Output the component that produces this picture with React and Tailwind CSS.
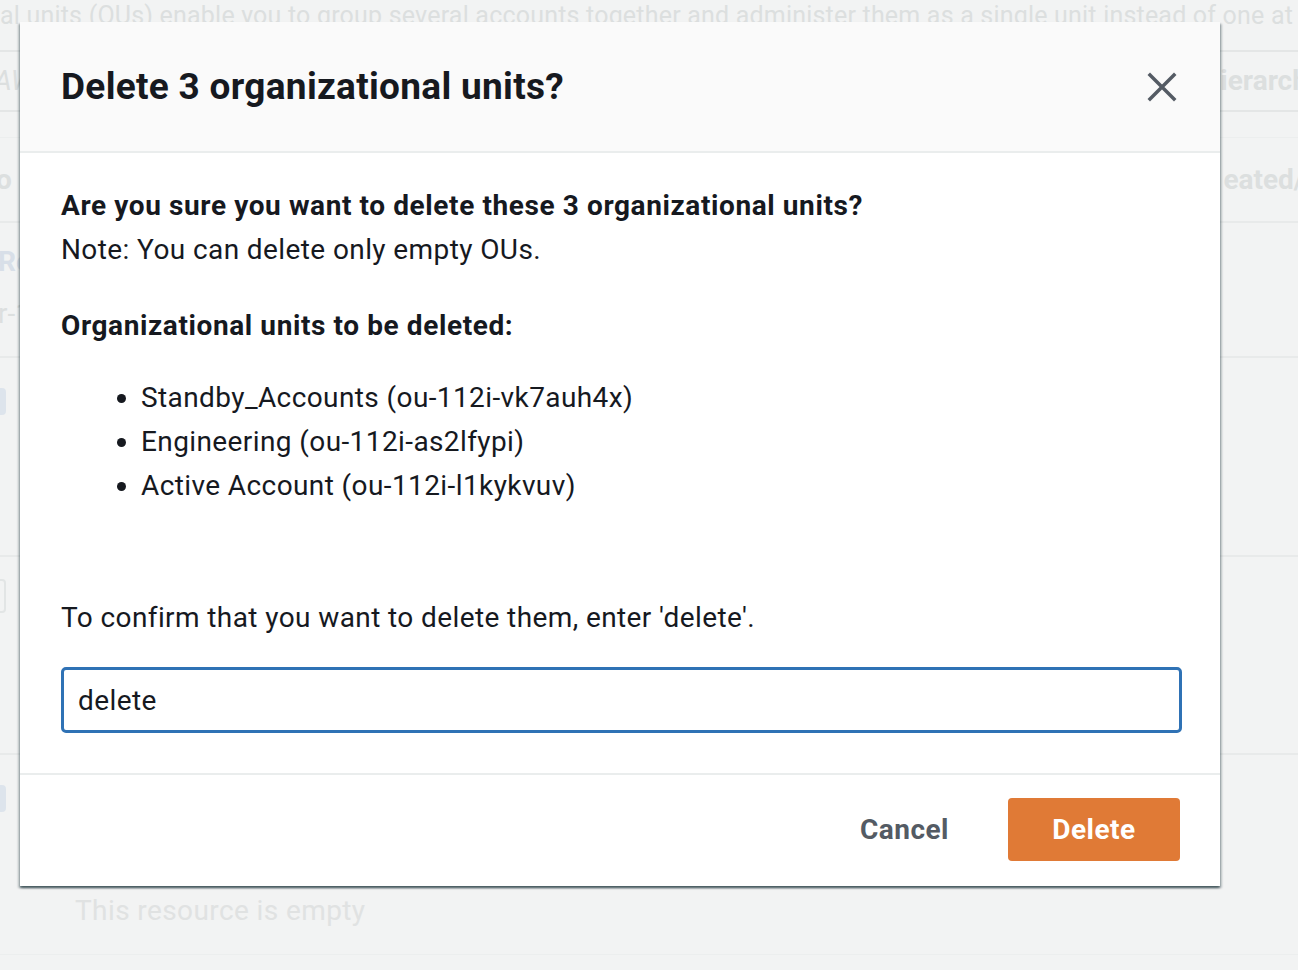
import React from 'react';

const units = [
  'Standby_Accounts (ou-112i-vk7auh4x)',
  'Engineering (ou-112i-as2lfypi)',
  'Active Account (ou-112i-l1kykvuv)',
];

function CloseIcon() {
  return (
    <svg width="30" height="30" viewBox="0 0 30 30" fill="none">
      <path d="M3 3L27 27M27 3L3 27" stroke="#545b64" strokeWidth="3.5" strokeLinecap="square" />
    </svg>
  );
}

function Backdrop() {
  return (
    <div className="w-full min-h-[970px] bg-[#f2f3f3] overflow-hidden text-[28px] text-[#dcdfdf]">
      <div className="h-[50px] whitespace-nowrap leading-[32px] text-[25px] tracking-[0.2px]">
        al units (OUs) enable you to group several accounts together and administer them as a single unit instead of one at a time
      </div>
      <div className="h-[62px] border-y-2 border-[#e4e6e6] flex items-center justify-between whitespace-nowrap">
        <span className="italic -ml-[6px]">AW</span>
        <span className="font-bold -mr-[24px]">ierarchy</span>
      </div>
      <div className="h-[26px] border-b border-[#eceeee]"></div>
      <div className="h-[85px] border-b-2 border-[#e8eaea] flex items-center justify-between font-bold whitespace-nowrap">
        <span className="-ml-[4px]">o</span>
        <span className="-mr-[22px]">eated/d</span>
      </div>
      <div className="h-[135px] border-b-2 border-[#e8eaea] flex flex-col justify-center gap-[10px] pb-[4px] whitespace-nowrap">
        <span className="font-bold text-[#d8dfe8] -ml-[2px]">Re</span>
        <span className="-ml-[2px]">r-1</span>
      </div>
      <div className="h-[199px] border-b-2 border-[#e8eaea] pt-[30px]">
        <div className="w-[6px] h-[27px] rounded-r-[4px] bg-[#dde4ec]"></div>
      </div>
      <div className="h-[198px] border-b-2 border-[#e8eaea] pt-[22px]">
        <div className="w-[6px] h-[34px] rounded-r-[4px] border-2 border-l-0 border-[#e2e5e5]"></div>
      </div>
      <div className="h-[200px] border-b border-[#eceeee] pt-[30px] flex flex-col">
        <div className="w-[6px] h-[27px] rounded-r-[4px] bg-[#dde4ec]"></div>
        <div className="pl-[75px] mt-[78px] text-[#e0e2e2] tracking-[0.4px]">This resource is empty</div>
      </div>
    </div>
  );
}

function DeleteModal() {
  return (
    <div className="absolute left-[20px] top-[22px] w-[1200px] bg-white shadow-[0_2px_2px_0_rgba(0,28,36,0.55),2px_2px_2px_0_rgba(0,28,36,0.2),-2px_2px_2px_0_rgba(0,28,36,0.2)] text-[#16191f]">
      <div className="h-[131px] bg-[#fafafa] border-b-2 border-[#eaeded] pl-[41px] pr-[42px] flex items-center justify-between">
        <h2 className="text-[37px] font-bold leading-[44px] tracking-[0.3px]">Delete 3 organizational units?</h2>
        <button className="p-[1px]"><CloseIcon /></button>
      </div>

      <div className="pl-[41px] pr-[38px] pt-[31px] pb-[40px] text-[28px] leading-[44px] tracking-[0.4px]">
        <p>
          <span className="font-bold tracking-[0.6px]">Are you sure you want to delete these 3 organizational units?</span>
          <br />
          Note: You can delete only empty OUs.
        </p>
        <p className="font-bold mt-[32px] tracking-[0.6px]">Organizational units to be deleted:</p>
        <ul className="mt-[28px] pl-[80px] list-disc">
          {units.map((u) => (
            <li key={u}>{u}</li>
          ))}
        </ul>
        <p className="mt-[88px]">To confirm that you want to delete them, enter 'delete'.</p>
        <input
          readOnly
          value="delete"
          className="mt-[27px] w-full h-[66px] border-[3px] border-[#2f72b5] rounded-[5px] px-[14px] text-[28px] text-[#16191f] tracking-[0.4px] outline-none"
        />
      </div>

      <div className="border-t-2 border-[#eaeded] pt-[23px] pb-[25px] pr-[40px] flex items-center justify-end">
        <button className="mr-[59px] text-[28px] font-bold text-[#545b64] tracking-[0.5px]">Cancel</button>
        <button className="w-[172px] h-[63px] rounded-[4px] bg-[#e07a36] text-white text-[28px] font-bold tracking-[0.5px]">Delete</button>
      </div>
    </div>
  );
}

export default function App() {
  return (
    <div className="relative w-full min-h-[970px] font-['Roboto',sans-serif]">
      <Backdrop />
      <DeleteModal />
    </div>
  );
}
